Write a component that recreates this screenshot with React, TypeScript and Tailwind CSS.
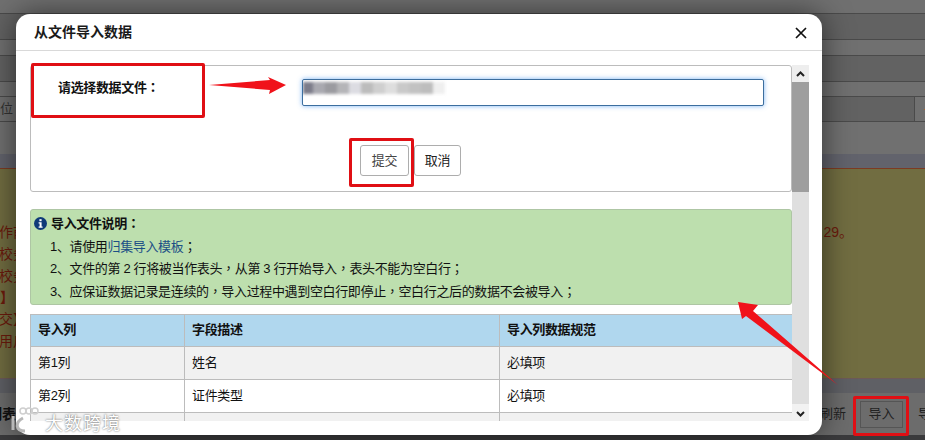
const font = { fontFamily: '"Liberation Sans", "Noto Sans CJK SC", sans-serif' };

const mosaic = [
  ['w-[10px]', 'bg-[#7c7c8a]'],
  ['w-[12px]', 'bg-[#a9a9b0]'],
  ['w-[12px]', 'bg-[#9b9ba0]'],
  ['w-[12px]', 'bg-[#b5b5b8]'],
  ['w-[12px]', 'bg-[#dcdce2]'],
  ['w-[12px]', 'bg-[#bcbcbc]'],
  ['w-[12px]', 'bg-[#cfcfcf]'],
  ['w-[12px]', 'bg-[#dedede]'],
  ['w-[12px]', 'bg-[#c9c9c9]'],
  ['w-[12px]', 'bg-[#c2c2c2]'],
  ['w-[12px]', 'bg-[#bdbdbd]'],
  ['w-[12px]', 'bg-[#efefef]'],
];

const rows = [
  ['第1列', '姓名', '必填项', 'bg-[#f1f1f1]'],
  ['第2列', '证件类型', '必填项', 'bg-white'],
  ['第3列', '证件号码', '必填项', 'bg-[#f1f1f1]'],
];

function P({ children }: { children: string }) {
  return <span className="font-['Noto_Sans_CJK_TC']">{children}</span>;
}

function Band({ className }: { className: string }) {
  return <div className={'w-full shrink-0 ' + className} />;
}

function Background() {
  return (
    <div className="flex h-full flex-col">
      <Band className="h-[13px] bg-[#707070]" />
      <Band className="h-[26px] border-t border-[#4a4a4a] bg-[#626262]" />
      <Band className="h-[16px] border-t border-[#4a4a4a] bg-[#707070]" />
      <Band className="h-[26px] border-t border-[#4a4a4a] bg-[#626262]" />
      <Band className="h-[15px] border-t border-[#4a4a4a] bg-[#707070]" />
      <div className="flex h-[26px] shrink-0 items-center border-y border-[#4a4a4a] bg-[#626262] text-[13px] text-[#333333]">
        <span className="-ml-[13px] w-[300px] bg-[#707070] leading-[24px]">单位</span>
        <div className="flex-1" />
        <div className="flex h-full w-[11px] items-center border-l border-[#4a4a4a] bg-[#707070]">
          <span className="ml-[9px] h-px w-[2px] bg-[#a8602c]" />
        </div>
      </div>
      <Band className="h-[32px] bg-[#707070]" />
      <Band className="h-[14px] bg-[#62636c]" />
      <div className="flex h-[210px] shrink-0 flex-col border-t border-[#7d3b22] bg-[#716d41] pt-[53px] text-[14px] leading-[21.8px] text-[#6b1a0c]">
        <div className="flex justify-between">
          <span className="-ml-px">作前</span>
          <span className="pr-[72px]">29。</span>
        </div>
        <span className="-ml-px">校务</span>
        <span className="-ml-px">校务</span>
        <span className="ml-0 font-bold">】 提</span>
        <span className="-ml-px">交】</span>
        <span className="-ml-px">用户</span>
      </div>
      <Band className="h-[15px] border-t border-[#6d5a58] bg-[#5f6065]" />
      <div className="flex h-[42px] shrink-0 items-center bg-[#6c6c6c] text-[13px] text-[#222222]">
        <span className="-ml-[12px] text-[14px] font-bold text-[#111111]">列表</span>
        <div className="flex-1" />
        <span className="mr-[14px]">刷新</span>
        <span className="flex h-[27px] w-[43px] items-center justify-center border border-[#555555] bg-[#6c6c6c]">
          导入
        </span>
        <span className="ml-[15px] w-[7px] overflow-hidden">导</span>
      </div>
      <Band className="flex-1 bg-[#3a3a3c]" />
    </div>
  );
}

function Modal() {
  return (
    <div className="absolute left-[16px] top-[14px] flex h-[421px] w-[806px] flex-col overflow-hidden rounded-[14px] bg-white tracking-[-0.35px] shadow-[0_0_30px_rgba(0,0,0,0.55)]">
      <div className="flex h-[37px] shrink-0 items-center justify-between border-b border-[#d9d9d9] pl-[18px] pr-[15px]">
        <span className="text-[14px] font-bold tracking-normal text-[#1a1a1a]">从文件导入数据</span>
        <svg width="12" height="12" viewBox="0 0 12 12" className="mt-[1px]">
          <path d="M1 1 L11 11 M11 1 L1 11" stroke="#111111" strokeWidth="1.7" />
        </svg>
      </div>
      <div className="mt-[14px] flex h-[356px] shrink-0 pl-[14px] pr-[13px]">
        <div className="flex w-[762px] flex-col overflow-hidden">
          <div className="flex h-[127px] shrink-0 flex-col rounded-[3px] border border-[#bcbcbc]">
            <div className="flex items-start pl-[27px] pt-[13px]">
              <span className="-mt-px h-[18px] w-[244px] text-[13px] font-bold leading-[18px] text-[#111111]">
                请选择数据文件<P>：</P>
              </span>
              <div className="relative h-[27px] w-[462px] overflow-hidden rounded-[2px] border border-[#3c6e9e] bg-white shadow-[0_0_5px_rgba(70,150,240,0.7)]">
                <div className="flex h-[14px] pt-[2px] blur-[1.5px]">
                  {mosaic.map((m, i) => (
                    <div key={i} className={'h-[12px] ' + m[0] + ' ' + m[1]} />
                  ))}
                </div>
              </div>
            </div>
            <div className="mt-[39px] flex justify-center gap-[5px] pr-[1px]">
              <button className="h-[31px] w-[49px] rounded-[3px] border border-[#adadad] bg-white text-[13px] text-[#444444]">
                提交
              </button>
              <button className="h-[31px] w-[47px] rounded-[3px] border border-[#adadad] bg-white text-[13px] text-[#222222]">
                取消
              </button>
            </div>
          </div>
          <div className="mt-[17px] h-[96px] shrink-0 rounded-[3px] border border-[#aec6a4] bg-[#bddfae] px-[3px] pt-[2px] text-[13px] leading-[22.5px] text-[#111111]">
            <div className="flex h-[22.5px] items-center gap-[4px] font-bold">
              <svg width="13" height="13" viewBox="0 0 13 13" className="shrink-0">
                <circle cx="6.5" cy="6.5" r="6.5" fill="#0f3a78" />
                <rect x="5.4" y="2.2" width="2.2" height="2" fill="#ffffff" />
                <path d="M4.6 5.3 H7.6 V9.6 H8.6 V10.8 H4.6 V9.6 H5.6 V6.5 H4.6 Z" fill="#ffffff" />
              </svg>
              <span className="h-[22.5px]">
                导入文件说明<P>：</P>
              </span>
            </div>
            <div className="pl-[16px]">
              <div className="h-[22.5px]">
                1、请使用<span className="text-[#1c4f86]">归集导入模板</span>
                <P>；</P>
              </div>
              <div className="h-[22.5px]">
                2、文件的第 2 行将被当作表头<P>，</P>从第 3 行开始导入<P>，</P>表头不能为空白行<P>；</P>
              </div>
              <div className="h-[22.5px]">
                3、应保证数据记录是连续的<P>，</P>导入过程中遇到空白行即停止<P>，</P>空白行之后的数据不会被导入<P>；</P>
              </div>
            </div>
          </div>
          <table className="mt-[9px] w-[762px] shrink-0 table-fixed border-collapse text-[13px] text-[#111111]">
            <colgroup>
              <col className="w-[154px]" />
              <col className="w-[315px]" />
              <col className="w-[293px]" />
            </colgroup>
            <thead>
              <tr className="h-[32px] bg-[#b0d7ee] font-bold">
                <th className="border border-[#bcbcbc] px-[7px] pb-[2px] text-left">导入列</th>
                <th className="border border-[#bcbcbc] px-[7px] pb-[2px] text-left">字段描述</th>
                <th className="border border-[#bcbcbc] px-[7px] pb-[2px] text-left">导入列数据规范</th>
              </tr>
            </thead>
            <tbody>
              {rows.map((r) => (
                <tr key={r[0]} className={'h-[33px] ' + r[3]}>
                  <td className="border border-[#bcbcbc] px-[7px]">{r[0]}</td>
                  <td className="border border-[#bcbcbc] px-[7px]">{r[1]}</td>
                  <td className="border border-[#bcbcbc] px-[7px]">{r[2]}</td>
                </tr>
              ))}
            </tbody>
          </table>
        </div>
        <div className="flex w-[17px] shrink-0 flex-col bg-[#dfdfdf]">
          <div className="flex h-[17px] items-center justify-center bg-[#eeeeee]">
            <svg width="9" height="6" viewBox="0 0 9 6">
              <path d="M1 5 L4.5 1.5 L8 5" fill="none" stroke="#222222" strokeWidth="2" />
            </svg>
          </div>
          <div className="h-[110px] bg-[#9e9e9e]" />
          <div className="flex-1" />
          <div className="flex h-[17px] items-center justify-center bg-[#f2f2f2]">
            <svg width="9" height="6" viewBox="0 0 9 6" className="mt-[2px]">
              <path d="M1 1 L4.5 4.5 L8 1" fill="none" stroke="#222222" strokeWidth="2" />
            </svg>
          </div>
        </div>
      </div>
    </div>
  );
}

function Annotations() {
  return (
    <>
      <div className="absolute left-[31px] top-[63px] h-[55px] w-[174px] rounded-[2px] border-[3px] border-[#e00f14]" />
      <div className="absolute left-[349px] top-[138px] h-[49px] w-[65px] rounded-[2px] border-[3px] border-[#e00f14]" />
      <div className="absolute left-[853px] top-[396px] h-[40px] w-[56px] rounded-[2px] border-[3px] border-[#e00f14]" />
      <svg className="absolute left-0 top-0" width="925" height="440" viewBox="0 0 925 440">
        <polygon points="209,85 270,80 268,77 286,85 269,94 270,90" fill="#f0121a" />
        <polygon points="738,302 758,305 753,311 838,385 746,316 742,319" fill="#f0121a" />
      </svg>
      <div className="absolute left-[10px] top-[407px] flex items-center gap-[3px]">
        <svg width="32" height="26" viewBox="0 0 32 26">
          <path d="M3 9 V23 M13 11 C5 15 5 24 15 24" fill="none" stroke="#b8b8b8" strokeWidth="3" />
          <circle cx="13" cy="4" r="3" fill="none" stroke="#cfcfcf" strokeWidth="1.5" />
          <circle cx="19" cy="4" r="3" fill="none" stroke="#cfcfcf" strokeWidth="1.5" />
          <circle cx="25" cy="4" r="3" fill="none" stroke="#cfcfcf" strokeWidth="1.5" />
        </svg>
        <span className="mt-[7px] text-[18px] leading-none tracking-[1px] text-white [text-shadow:0_0_2px_rgba(0,0,0,0.7)]">大数跨境</span>
      </div>
    </>
  );
}

export default function App() {
  return (
    <div className="relative h-[440px] w-[925px] overflow-hidden bg-[#707070]" style={font}>
      <Background />
      <Modal />
      <Annotations />
    </div>
  );
}
